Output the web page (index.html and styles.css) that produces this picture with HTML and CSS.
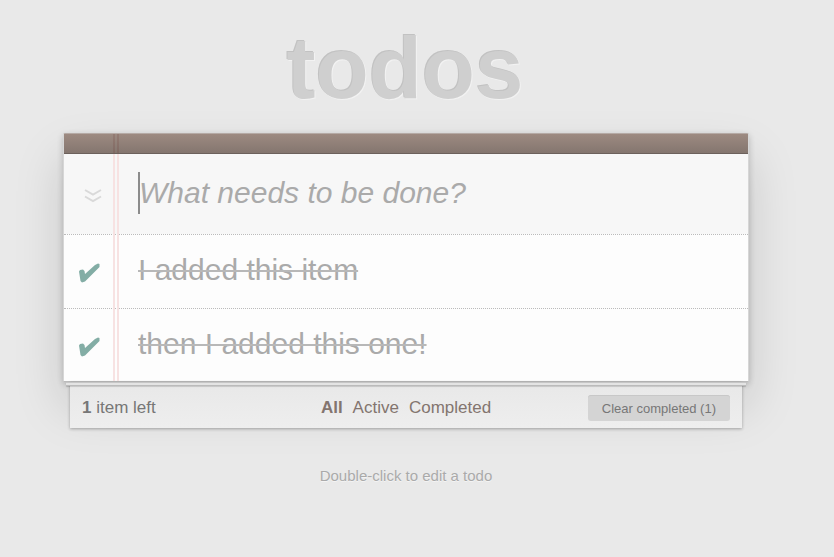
FILE: index.html
```html
<!DOCTYPE html>
<html lang="en">
<head>
<meta charset="utf-8">
<title>todos</title>
<link rel="stylesheet" href="styles.css">
</head>
<body>
<div class="page">
  <h1 class="title">todos</h1>
  <main class="card">
    <div class="bar"></div>
    <div class="row entry">
      <button class="gutter" type="button" aria-label="Mark all as complete">
        <svg class="chevrons" viewBox="0 0 18 14" aria-hidden="true"><path d="M1 1 L9 5.5 L17 1 M1 7.500 L9 12 L17 7.500"/></svg>
      </button>
      <div class="field">
        <input class="new-todo" type="text" placeholder="What needs to be done?" aria-label="New todo">
        <span class="caret"></span>
      </div>
    </div>
    <ul class="list">
      <li class="row">
        <span class="gutter">
          <input class="toggle" type="checkbox" id="todo-1" checked>
          <svg class="check" viewBox="0 0 22 20" aria-hidden="true"><path d="M1 8.500 L2 7 L5 6.500 L6.500 8 L7 11 L17 2 L20 0.500 L21.500 1 L21.500 4 L7 18.500 L4 19.500 L2.500 18 Z"/></svg>
        </span>
        <label class="todo" for="todo-1">I added this item</label>
      </li>
      <li class="row">
        <span class="gutter">
          <input class="toggle" type="checkbox" id="todo-2" checked>
          <svg class="check" viewBox="0 0 22 20" aria-hidden="true"><path d="M1 8.500 L2 7 L5 6.500 L6.500 8 L7 11 L17 2 L20 0.500 L21.500 1 L21.500 4 L7 18.500 L4 19.500 L2.500 18 Z"/></svg>
        </span>
        <label class="todo" for="todo-2">then I added this one!</label>
      </li>
    </ul>
  </main>
  <footer class="footer">
    <span class="count"><strong>1</strong> item left</span>
    <nav class="filters">
      <a class="current" href="#all">All</a>
      <a href="#active">Active</a>
      <a href="#completed">Completed</a>
    </nav>
    <button class="clear" type="button">Clear completed (1)</button>
  </footer>
  <p class="hint">Double-click to edit a todo</p>
</div>
</body>
</html>
```
FILE: styles.css
```css
*,
*::before {
  box-sizing: border-box;
}

body {
  margin: 0;
  background: #e9e9e9;
  color: #777;
  font-family: "Liberation Sans", Arial, sans-serif;
}

.page {
  margin: 0 85px 0 63px;
}

.title {
  margin: 0;
  padding: 18px 2px 15px 0;
  font-size: 87px;
  line-height: 100px;
  text-align: center;
  color: #cfcfcf;
  text-shadow: -1px -1px 0 #c2c2c2, 1px 1px 0 #f2f2f2;
}

.card {
  position: relative;
  border: 1px solid #d6d6d6;
  border-top-color: #b5aaa5;
  border-bottom-color: #bbb;
  border-radius: 2px 2px 0 0;
  background: #fdfdfd;
  box-shadow: 0 2px 6px rgba(0, 0, 0, 0.2), 0 25px 50px rgba(0, 0, 0, 0.15);
}

.card::before {
  content: "";
  position: absolute;
  top: 20px;
  bottom: 0;
  left: 49px;
  width: 6px;
  border: 2px solid #f7e2e2;
  border-width: 0 2px;
  z-index: 1;
}

.bar {
  height: 20px;
  border-bottom: 1px solid #6c615c;
  background:
    linear-gradient(#947b73, #7f6a63) 49px 0 / 2px 100% no-repeat,
    linear-gradient(#947b73, #7f6a63) 53px 0 / 2px 100% no-repeat,
    linear-gradient(#9d8a81, #84766f);
}

.row {
  display: flex;
  height: 74px;
  border-top: 1px dotted #bbb;
}

.entry {
  height: 80px;
  border-top: 0;
  background: #f7f7f7;
}

.list {
  margin: 0;
  padding: 0;
  list-style: none;
}

.list .row:last-child { height: 73px; }

.gutter {
  position: relative;
  display: flex;
  flex: 0 0 50px;
  align-items: center;
  justify-content: center;
  margin: 0;
  padding: 3px 0 0;
  border: 0;
  background: none;
}

.entry .gutter { padding-left: 8px; }

.chevrons {
  width: 18px;
  height: 14px;
  fill: none;
  stroke: #d9d9d9;
  stroke-width: 2;
}

.toggle {
  position: absolute;
  inset: 0;
  margin: 0;
  appearance: none;
}

.check {
  width: 22px;
  height: 20px;
  fill: #83ada5;
}

.field {
  position: relative;
  flex: 1;
  padding-left: 25px;
}

.new-todo {
  width: 100%;
  height: 77px;
  padding: 0;
  border: 0;
  outline: 0;
  background: none;
  font: italic 30px "Liberation Sans", Arial, sans-serif;
}

.new-todo::placeholder { color: #aaa; opacity: 1; }

.caret {
  position: absolute;
  top: 18px;
  left: 24px;
  width: 2px;
  height: 42px;
  background: #8c8c8c;
}

.todo {
  flex: 1;
  padding-left: 24px;
  font-size: 30px;
  line-height: 70px;
  color: #aaa;
  text-decoration: line-through 2px #b8b8b8;
}

.footer {
  position: relative;
  display: grid;
  grid-template-columns: 1fr auto 1fr;
  align-items: center;
  height: 46px;
  margin: 0 7px;
  padding: 5px 12px 0;
  background: linear-gradient(#e8e8e8, #eee);
  font-size: 17px;
  box-shadow: 0 1px 3px rgba(0, 0, 0, 0.3);
}

.footer::before {
  content: "";
  position: absolute;
  top: 0;
  left: -4px;
  right: -4px;
  height: 4px;
  background: #e4e4e4;
  border-top: 1px solid #c6c6c6;
  border-bottom: 1px solid #bbb;
  box-shadow: 0 1px 1px rgba(0, 0, 0, 0.15);
}

.filters { display: flex; gap: 10px; }

.filters a { color: #83756f; text-decoration: none; }

.filters .current { font-weight: bold; }

.clear {
  justify-self: end;
  height: 26px;
  padding: 1px 14px 0;
  border: 0;
  border-radius: 3px;
  background: #d4d4d4;
  color: #777;
  font: 13px "Liberation Sans", Arial, sans-serif;
  box-shadow: inset 0 1px 0 #c8c8c8;
}

.hint {
  margin: 38px 0 0;
  font-size: 15px;
  line-height: 20px;
  text-align: center;
  color: #aaa;
  text-shadow: 0 1px 0 #f4f4f4;
}
```
